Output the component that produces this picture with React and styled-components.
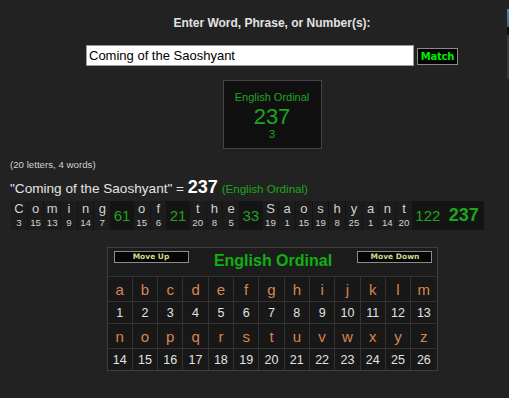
import React from "react";
import styled, { createGlobalStyle } from "styled-components";

const Global = createGlobalStyle`
  html, body { margin: 0; padding: 0; background: #222222; overflow: hidden; }
  body { font-family: "Liberation Sans", Arial, sans-serif; }
`;

const Page = styled.div`
  position: relative;
  width: 509px;
  height: 398px;
  overflow: hidden;
`;

const Main = styled.main`
  width: 524px;
  padding-left: 10px;
  display: flex;
  flex-direction: column;
  align-items: center;
`;

const Title = styled.div`
  margin-top: 16px;
  font-size: 12px;
  font-weight: bold;
  color: #e2e2e2;
  line-height: 14px;
`;

const Form = styled.div`
  margin-top: 15px;
  display: flex;
  align-items: center;
  gap: 3px;
`;

const Input = styled.input`
  box-sizing: border-box;
  width: 328px;
  height: 21px;
  border: 1px solid #9a9a9a;
  background: #fff;
  color: #000;
  font-family: "Liberation Sans", Arial, sans-serif;
  font-size: 13px;
  padding: 0 2px;
  margin: 0;
  outline: none;
`;

const MatchButton = styled.button`
  box-sizing: border-box;
  width: 41px;
  height: 17px;
  margin-top: 2px;
  padding: 0;
  background: #000;
  border: 1px solid #8a8a8a;
  color: #00ee00;
  font-family: "DejaVu Sans", Verdana, sans-serif;
  font-weight: bold;
  font-size: 10px;
  letter-spacing: -0.2px;
`;

const ResultBox = styled.div`
  box-sizing: border-box;
  margin-top: 14px;
  width: 99px;
  height: 69px;
  background: #101010;
  border: 1px solid #444;
  display: flex;
  flex-direction: column;
  align-items: center;
  color: #1ea51e;
`;

const BoxLabel = styled.div`
  margin-top: 10px;
  font-size: 11px;
  line-height: 13px;
`;

const BoxValue = styled.div`
  font-size: 22px;
  line-height: 22px;
  margin-top: 2px;
`;

const BoxSub = styled.div`
  font-size: 11px;
  line-height: 12px;
`;

const Left = styled.div`
  align-self: stretch;
  display: flex;
  flex-direction: column;
  align-items: flex-start;
`;

const Counts = styled.div`
  margin-top: 10px;
  font-size: 9.7px;
  line-height: 12px;
  color: #d0d0d0;
`;

const Phrase = styled.div`
  margin-top: 8px;
  font-size: 13.6px;
  line-height: 17px;
  color: #e4e4e4;
  white-space: nowrap;
`;

const PhraseValue = styled.b`
  font-size: 18px;
  color: #fff;
`;

const PhraseCipher = styled.span`
  font-size: 11.6px;
  color: #1ea51e;
`;

const Breakdown = styled.div`
  margin-top: 4px;
  margin-left: 1px;
  display: flex;
  background: #141414;
  height: 29px;
`;

const LetterCol = styled.div`
  width: 15.7px;
  margin-right: 1px;
  display: flex;
  flex-direction: column;
  align-items: center;
  background: #1c1c1c;
  color: #d2d2d2;
`;

const Letter = styled.div`
  font-size: 13px;
  line-height: 15px;
  height: 15px;
`;

const LetterNum = styled.div`
  font-size: 9.7px;
  line-height: 14px;
`;

const WordSum = styled.div`
  display: flex;
  align-items: center;
  justify-content: center;
  padding: 0 ${(p) => (p.$total ? 5 : 2.5)}px;
  margin-right: ${(p) => (p.$total ? 0 : 1)}px;
  background: #141414;
  color: #1ea51e;
  font-size: ${(p) => (p.$total ? 18 : 15)}px;
  font-weight: ${(p) => (p.$total ? "bold" : "normal")};
`;

const Chart = styled.div`
  margin-top: 17px;
  box-sizing: border-box;
  width: 331px;
  display: grid;
  grid-template-columns: repeat(13, 1fr);
  background: #1c1c1c;
  border: 1px solid #3f3f3f;
`;

const ChartHead = styled.div`
  grid-column: 1 / -1;
  height: 25px;
  display: flex;
  align-items: flex-start;
  justify-content: space-between;
  padding: 3px 4px 0 6px;
  border-bottom: 1px solid #333;
`;

const MoveButton = styled.button`
  box-sizing: border-box;
  width: 75px;
  height: 12px;
  padding: 0;
  margin: 0;
  background: #050505;
  border: 1px solid #8c8c8c;
  color: #d6d68a;
  font-family: "DejaVu Sans", Verdana, sans-serif;
  font-weight: bold;
  font-size: 7.5px;
  line-height: 10px;
`;

const ChartTitle = styled.div`
  color: #10b010;
  font-weight: bold;
  font-size: 16px;
  line-height: 20px;
`;

const Cell = styled.div`
  display: flex;
  align-items: center;
  justify-content: center;
  height: ${(p) => (p.$letter ? 24 : 21)}px;
  border-right: 1px solid #333;
  border-bottom: 1px solid #333;
  background: #181818;
  color: ${(p) => (p.$letter ? "#d8864e" : "#e2e2e2")};
  font-size: ${(p) => (p.$letter ? 15 : 12.5)}px;
  &:nth-child(13n + 1) { border-right: none; }
  &.last { border-bottom: none; }
`;

const SideStrip = styled.div`
  position: absolute;
  top: 9px;
  right: 0;
  width: 2px;
  height: 70px;
  background: linear-gradient(
    #5a7fb4 0, #3d5f94 18px, #0c0c0c 18px, #0c0c0c 26px, #3a3a3a 26px, #3a3a3a 100%
  );
`;

const words = ["Coming", "of", "the", "Saoshyant"];
const ord = (c) => c.toLowerCase().charCodeAt(0) - 96;

export default function App() {
  const alphabet = "abcdefghijklmnopqrstuvwxyz".split("");
  const rows = [alphabet.slice(0, 13), alphabet.slice(13)];
  return (
    <Page>
      <Global />
      <Main>
        <Title>Enter Word, Phrase, or Number(s):</Title>
        <Form>
          <Input defaultValue="Coming of the Saoshyant" />
          <MatchButton>Match</MatchButton>
        </Form>
        <ResultBox>
          <BoxLabel>English Ordinal</BoxLabel>
          <BoxValue>237</BoxValue>
          <BoxSub>3</BoxSub>
        </ResultBox>
        <Left>
          <Counts>(20 letters, 4 words)</Counts>
          <Phrase>
            "Coming of the Saoshyant" = <PhraseValue>237</PhraseValue>{" "}
            <PhraseCipher>(English Ordinal)</PhraseCipher>
          </Phrase>
          <Breakdown>
            {words.map((w) => (
              <React.Fragment key={w}>
                {w.split("").map((ch, i) => (
                  <LetterCol key={i}>
                    <Letter>{ch}</Letter>
                    <LetterNum>{ord(ch)}</LetterNum>
                  </LetterCol>
                ))}
                <WordSum>{w.split("").reduce((s, c) => s + ord(c), 0)}</WordSum>
              </React.Fragment>
            ))}
            <WordSum $total>237</WordSum>
          </Breakdown>
        </Left>
        <Chart>
          <ChartHead>
            <MoveButton>Move Up</MoveButton>
            <ChartTitle>English Ordinal</ChartTitle>
            <MoveButton>Move Down</MoveButton>
          </ChartHead>
          {rows.map((row, r) => (
            <React.Fragment key={r}>
              {row.map((c) => (
                <Cell key={c} $letter>{c}</Cell>
              ))}
              {row.map((c) => (
                <Cell key={c + "n"} className={r === 1 ? "last" : ""}>
                  {ord(c)}
                </Cell>
              ))}
            </React.Fragment>
          ))}
        </Chart>
      </Main>
      <SideStrip />
    </Page>
  );
}
